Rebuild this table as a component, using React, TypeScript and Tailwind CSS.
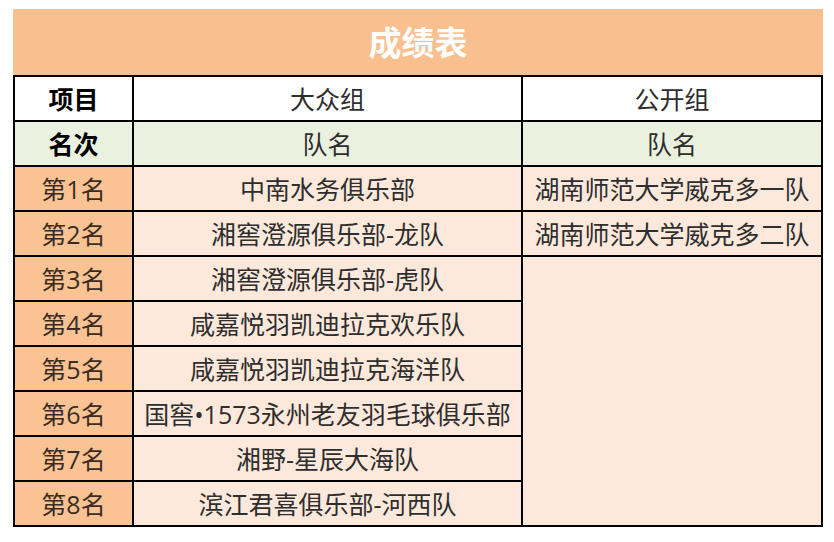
import React from "react";

const ranks = ["第1名", "第2名", "第3名", "第4名", "第5名", "第6名", "第7名", "第8名"];
const mass = [
  "中南水务俱乐部",
  "湘窖澄源俱乐部-龙队",
  "湘窖澄源俱乐部-虎队",
  "咸嘉悦羽凯迪拉克欢乐队",
  "咸嘉悦羽凯迪拉克海洋队",
  "国窖•1573永州老友羽毛球俱乐部",
  "湘野-星辰大海队",
  "滨江君喜俱乐部-河西队",
];
const open = ["湖南师范大学威克多一队", "湖南师范大学威克多二队"];

export default function App() {
  const cell = "flex items-center justify-center text-[25px] leading-none text-[#2e2e2e] pt-[2px]";
  return (
    <div
      className="w-[834px] h-[542px] bg-white pt-[9px] pl-[13px]"
      style={{ fontFamily: '"Open Sans", "Noto Sans CJK SC", sans-serif' }}
    >
      <div className="w-[810px]">
        <div className="h-[66px] bg-[#F9C08F] flex items-center justify-center">
          <span className="text-white font-bold text-[33px] leading-none">成绩表</span>
        </div>
        <div className="grid grid-cols-[117px_387px_298px] grid-rows-[repeat(10,43px)] gap-[2px] p-[2px] bg-black">
          <div className={`${cell} bg-white font-bold text-black`}>项目</div>
          <div className={`${cell} bg-white`}>大众组</div>
          <div className={`${cell} bg-white`}>公开组</div>
          <div className={`${cell} bg-[#EBF1DF] font-bold text-black`}>名次</div>
          <div className={`${cell} bg-[#EBF1DF]`}>队名</div>
          <div className={`${cell} bg-[#EBF1DF]`}>队名</div>
          {ranks.map((r, i) => (
            <React.Fragment key={r}>
              <div className={`${cell} bg-[#FAC393] text-[#3a2c22]`}>{r}</div>
              <div className={`${cell} bg-[#FCE9DB]`}>{mass[i]}</div>
              {i < 2 ? (
                <div className={`${cell} bg-[#FCE9DB]`}>{open[i]}</div>
              ) : i === 2 ? (
                <div className="row-span-6 bg-[#FCE9DB]" />
              ) : null}
            </React.Fragment>
          ))}
        </div>
      </div>
    </div>
  );
}
